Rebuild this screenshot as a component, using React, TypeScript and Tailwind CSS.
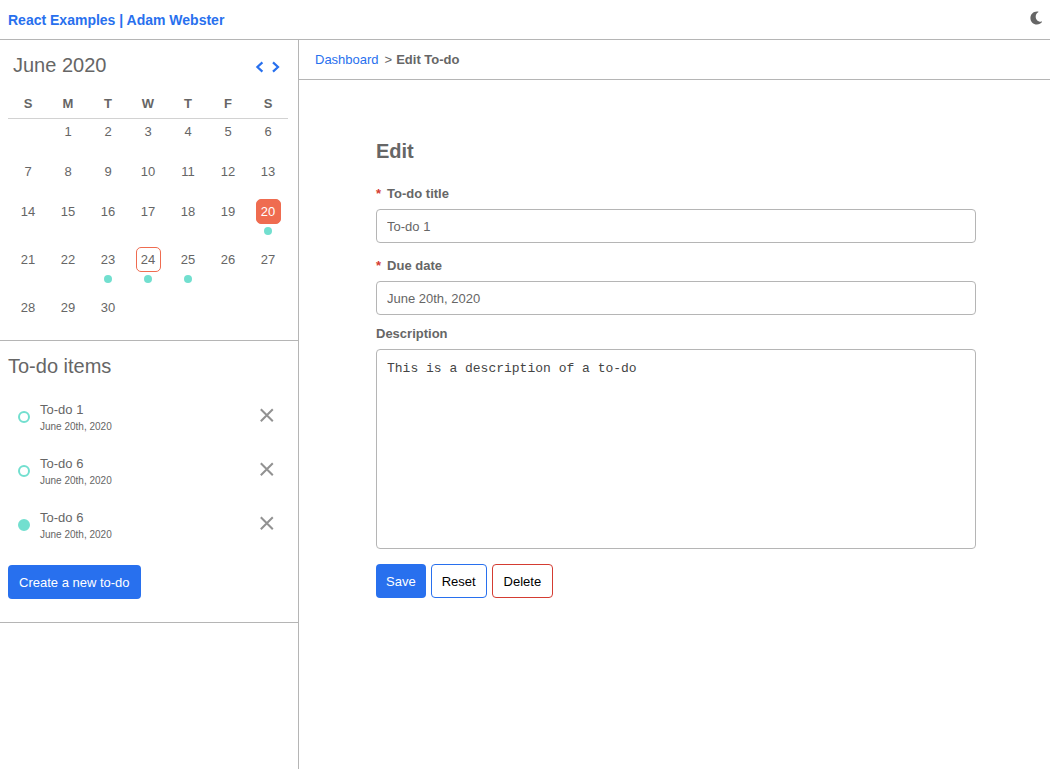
import React from "react";

type Day = { day: number | null; todo?: boolean; selected?: boolean; today?: boolean };

const todoDays = [20, 23, 24, 25];
const makeWeek = (start: number): Day[] =>
  Array.from({ length: 7 }, (_, i) => {
    const day = start + i;
    return {
      day: day >= 1 && day <= 30 ? day : null,
      todo: todoDays.includes(day),
      selected: day === 20,
      today: day === 24,
    };
  });
const weeks = [0, 7, 14, 21, 28].map(makeWeek);

const todos = [
  { id: 1, title: "To-do 1", date: "June 20th, 2020", done: false },
  { id: 2, title: "To-do 6", date: "June 20th, 2020", done: false },
  { id: 3, title: "To-do 6", date: "June 20th, 2020", done: true },
];

function DayCell({ day, todo, selected, today }: Day) {
  let box = "border-transparent";
  if (selected) box = "border-[#ef6c50] bg-[#ef6c50] text-white";
  if (today) box = "border-[#ef6c50]";
  return (
    <td className="p-0 align-top">
      {day !== null && (
        <button type="button" className="mx-auto flex flex-col items-center gap-[3px]">
          <span className={`flex size-[25px] items-center justify-center rounded-[5px] border ${box}`}>{day}</span>
          {todo && <span className="size-2 rounded-full bg-[#72dfcf]" />}
        </button>
      )}
    </td>
  );
}

function Calendar() {
  return (
    <section className="border-b border-[#b5b5b5] px-2 pt-[11px] pb-[5px]">
      <div className="flex items-center justify-between pr-2 pl-[5px]">
        <h2 className="text-[20px] leading-7">June 2020</h2>
        <div className="flex gap-1 pt-1 text-[#2870ee]">
          <button type="button" aria-label="Previous month">
            <svg className="h-4 w-3" viewBox="0 0 12 16" fill="none" stroke="currentColor" strokeWidth="2.2">
              <path d="M8.4 3.4 3.400 8l5 4.600" />
            </svg>
          </button>
          <button type="button" aria-label="Next month">
            <svg className="h-4 w-3" viewBox="0 0 12 16" fill="none" stroke="currentColor" strokeWidth="2.2">
              <path d="M3 3.400 8 8l-5 4.600" />
            </svg>
          </button>
        </div>
      </div>
      <table className="mt-[11px] w-[280px] table-fixed border-separate border-spacing-0 text-center">
        <thead>
          <tr className="h-[29px]">
            {["S", "M", "T", "W", "T", "F", "S"].map((name, i) => (
              <th key={i} scope="col" className="border-b border-[#d2d2d2] p-0 font-bold">
                {name}
              </th>
            ))}
          </tr>
        </thead>
        <tbody>
          {weeks.map((week, i) => (
            <tr key={i} className={week.some((d) => d.todo) ? "h-12" : "h-10"}>
              {week.map((d, j) => (
                <DayCell key={j} {...d} />
              ))}
            </tr>
          ))}
        </tbody>
      </table>
    </section>
  );
}

function TodoList() {
  return (
    <section className="border-b border-[#b5b5b5] px-2 pt-[11px] pb-[23px]">
      <h2 className="text-[20px] leading-7">To-do items</h2>
      <ul className="mt-2">
        {todos.map((t) => (
          <li key={t.id} className="flex h-[54px] items-center pr-[15px] pl-[10px]">
            <span
              className={`mt-1 size-3 rounded-full border-2 border-[#72dfcf] ${t.done ? "bg-[#72dfcf]" : ""}`}
            />
            <div className="ml-[10px] flex-1 pt-[6px]">
              <p className="leading-[18px]">{t.title}</p>
              <p className="text-[10px] leading-4">{t.date}</p>
            </div>
            <button type="button" aria-label={`Remove ${t.title}`}>
              <svg className="size-4" viewBox="0 0 16 16" fill="none" stroke="#929292" strokeWidth="2">
                <path d="M1.800 2.300l12 12M13.800 2.300l-12 12" />
              </svg>
            </button>
          </li>
        ))}
      </ul>
      <button type="button" className="mt-[15px] h-[34px] rounded-[4px] bg-[#2870ee] px-[11px] pt-0.5 text-white">
        Create a new to-do
      </button>
    </section>
  );
}

function Label({ htmlFor, required, children }: { htmlFor: string; required?: boolean; children: React.ReactNode }) {
  return (
    <label htmlFor={htmlFor} className="block leading-5 font-bold">
      {required && <span className="mr-[6px] text-[#d43c32]">*</span>}
      {children}
    </label>
  );
}

export default function App() {
  return (
    <div className="flex min-h-screen flex-col bg-white font-['Liberation_Sans',Arial,sans-serif] text-[13px] leading-5 text-[#666]">
      <header className="flex h-10 items-center justify-between border-b border-[#b5b5b5] px-2">
        <a href="#" className="text-[14px] font-bold text-[#2870ee]">
          React Examples | Adam Webster
        </a>
        <button type="button" aria-label="Dark mode" className="mb-1">
          <svg className="h-[14px] w-3" viewBox="0 0 12 14" fill="#666">
            <path d="M7.200 .5C3.300.4.400 3.300.400 7c0 3.800 2.900 6.600 6.500 6.600 2.100 0 4-.9 5.100-2.500.2-.3 0-.6-.3-.5C8.500 11.200 5.700 8.900 5.700 5.700c0-1.900 1-3.600 2.500-4.500.3-.2.200-.6-.1-.6z" />
          </svg>
        </button>
      </header>
      <div className="flex flex-1">
        <aside className="w-[299px] shrink-0 border-r border-[#b5b5b5]">
          <Calendar />
          <TodoList />
        </aside>
        <main className="min-w-0 flex-1">
          <nav aria-label="Breadcrumb" className="flex h-10 items-center border-b border-[#b5b5b5] px-4">
            <a href="#" className="text-[#2870ee]">
              Dashboard
            </a>
            <span className="mr-1 ml-[6px]">&gt;</span>
            <span className="font-bold">Edit To-do</span>
          </nav>
          <div className="pt-[57px] pl-[3px]">
            <form className="mx-auto max-w-[600px]" onSubmit={(e) => e.preventDefault()}>
              <h1 className="text-[20px] leading-7 font-bold">Edit</h1>
              <div className="mt-[19px]">
                <Label htmlFor="title" required>
                  To-do title
                </Label>
                <input
                  id="title"
                  type="text"
                  defaultValue="To-do 1"
                  className="mt-[5px] block h-[34px] w-full rounded-[4px] border border-[#b5b5b5] px-[10px]"
                />
              </div>
              <div className="mt-[13px]">
                <Label htmlFor="due" required>
                  Due date
                </Label>
                <input
                  id="due"
                  type="text"
                  defaultValue="June 20th, 2020"
                  className="mt-[5px] block h-[34px] w-full rounded-[4px] border border-[#b5b5b5] px-[10px]"
                />
              </div>
              <div className="mt-[9px]">
                <Label htmlFor="description">Description</Label>
                <textarea
                  id="description"
                  defaultValue="This is a description of a to-do"
                  className="mt-[5px] block h-[200px] w-full resize-none rounded-[4px] border border-[#b5b5b5] px-[10px] py-[9px] font-['Liberation_Mono','Courier_New',monospace] text-[#444]"
                />
              </div>
              <div className="mt-[15px] flex gap-[5px]">
                <button type="submit" className="h-[34px] rounded-[4px] bg-[#2870ee] px-[10px] pt-0.5 text-white">
                  Save
                </button>
                <button type="reset" className="h-[34px] rounded-[4px] border border-[#2870ee] px-[10px] pt-0.5 text-black">
                  Reset
                </button>
                <button type="button" className="h-[34px] rounded-[4px] border border-[#d43c32] px-[11px] pt-0.5 text-black">
                  Delete
                </button>
              </div>
            </form>
          </div>
        </main>
      </div>
    </div>
  );
}
